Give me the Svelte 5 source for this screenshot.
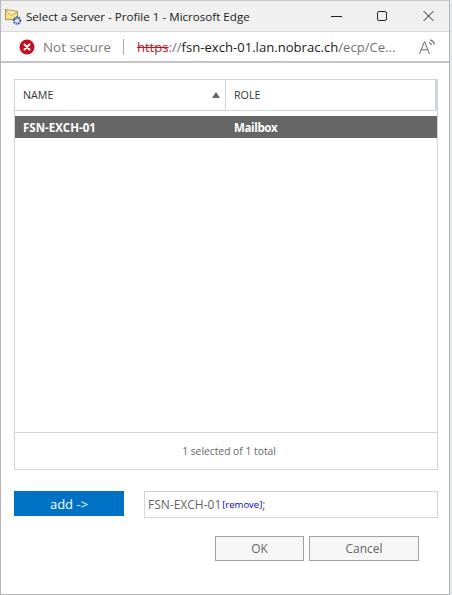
<script>
  let rows = [{ name: 'FSN-EXCH-01', role: 'Mailbox' }];
</script>

<div class="window">
  <div class="titlebar">
    <svg class="appicon" width="17" height="17" viewBox="0 0 17 17">
      <path d="M0.500 1.500L12.500 3.500V11.500H0.500Z" fill="#f6df8e" stroke="#a98f45" />
      <path d="M1 2l5 5.500L12 4" fill="#fbeeb8" stroke="#c4aa60" />
      <circle cx="12" cy="12.500" r="3.200" fill="none" stroke="#3c63b5" stroke-width="2.200" stroke-dasharray="1.600 0.700" />
      <circle cx="12" cy="12.500" r="1.200" fill="#dfe8f7" />
    </svg>
    <span class="title">Select a Server - Profile 1 - Microsoft Edge</span>
    <div class="controls">
      <svg width="12" height="12" viewBox="0 0 12 12"><path d="M0 6.500h11" stroke="#222" fill="none" /></svg>
      <svg width="12" height="12" viewBox="0 0 12 12"><rect x="0.500" y="1.500" width="9" height="9" rx="1.500" stroke="#222" fill="none" /></svg>
      <svg width="12" height="12" viewBox="0 0 12 12"><path d="M0.500 1l10 10M10.500 1l-10 10" stroke="#222" fill="none" /></svg>
    </div>
  </div>

  <div class="addressbar">
    <svg class="erroricon" width="16" height="16" viewBox="0 0 16 16">
      <circle cx="8" cy="8" r="7.500" fill="#c50f1f" />
      <path d="M5.500 5.500l5 5M10.500 5.500l-5 5" stroke="#fff" stroke-width="2" stroke-linecap="round" />
    </svg>
    <span class="secure">Not secure</span>
    <span class="sep"></span>
    <span class="url"><span class="https">https</span><span class="dim">://</span>fsn-exch-01.lan.nobrac.ch<span class="dim">/ecp/Ce...</span></span>
    <svg class="readaloud" width="20" height="18" viewBox="0 0 20 18">
      <path d="M1.500 16L6.500 3.500L11.500 16M3.200 11.800h6.600" stroke="#6a6a6a" fill="none" />
      <path d="M11 4.500a3 3 0 0 1 2.500 2.500M12 1.800a6 6 0 0 1 4.500 4.700" stroke="#6a6a6a" stroke-width="1.200" fill="none" />
    </svg>
  </div>

  <div class="content">
    <div class="grid">
      <div class="head">
        <div class="col name">NAME<span class="sort"></span></div>
        <div class="col role">ROLE</div>
      </div>
      <div class="rows">
        {#each rows as row}
          <div class="row">
            <div class="cell name">{row.name}</div>
            <div class="cell role">{row.role}</div>
          </div>
        {/each}
      </div>
      <div class="foot">1 selected of 1 total</div>
    </div>

    <div class="picker">
      <button class="add">add -&gt;</button>
      <div class="picked">FSN-EXCH-01<span class="remove">[remove]</span>;</div>
    </div>

    <div class="actions">
      <button class="btn ok">OK</button>
      <button class="btn cancel">Cancel</button>
    </div>
  </div>
</div>

<style>
  :global(body) {
    margin: 0;
    background: #e6e8ea;
  }
  .window {
    box-sizing: border-box;
    width: 450px;
    height: 595px;
    background: #fff;
    border: 1px solid #b4b4b4;
    border-top-color: #c8c8c8;
    font-family: "Open Sans", "Noto Sans", sans-serif;
  }
  .titlebar {
    display: flex;
    align-items: center;
    box-sizing: border-box;
    height: 31px;
    background: #f0f0f0;
    border-bottom: 1px solid #d8d8d8;
    color: #1a1a1a;
    font-size: 11.600px;
  }
  .appicon {
    margin-left: 4px;
    margin-right: 4px;
  }
  .title {
    flex: 1;
    white-space: nowrap;
  }
  .controls {
    display: flex;
    gap: 34px;
    margin-right: 14px;
    align-items: center;
  }
  .addressbar {
    display: flex;
    align-items: center;
    box-sizing: border-box;
    height: 31px;
    border-bottom: 2px solid #c4c4c4;
    font-size: 13.400px;
  }
  .erroricon {
    margin-left: 18px;
    margin-right: 8px;
  }
  .secure {
    color: #7a7a7a;
    white-space: nowrap;
  }
  .sep {
    width: 1px;
    height: 16px;
    background: #b0b0b0;
    margin: 0 13px 0 12px;
  }
  .url {
    flex: 1;
    color: #1a1a1a;
    white-space: nowrap;
    font-size: 13.100px;
  }
  .https {
    color: #c50f1f;
    text-decoration: line-through;
  }
  .dim {
    color: #6f6f6f;
  }
  .readaloud {
    margin-right: 11px;
  }
  .content {
    padding: 16px 11px 0 13px;
  }
  .grid {
    display: flex;
    flex-direction: column;
    height: 391px;
    box-sizing: border-box;
    border: 1px solid #cfd6d9;
  }
  .head {
    display: flex;
    height: 30px;
    border-bottom: 1px solid #cfd6d9;
    font-size: 10.700px;
    color: #333;
  }
  .col {
    display: flex;
    align-items: center;
    box-sizing: border-box;
    padding-left: 8px;
  }
  .col.name {
    width: 211px;
    border-right: 1px solid #cfd6d9;
    justify-content: space-between;
    padding-right: 5px;
  }
  .col.role {
    flex: 1;
    border-right: 2px solid #cfd6d9;
  }
  .sort {
    width: 0;
    height: 0;
    border-left: 4px solid transparent;
    border-right: 4px solid transparent;
    border-bottom: 6px solid #666;
  }
  .rows {
    flex: 1;
    padding-top: 5px;
  }
  .row {
    display: flex;
    align-items: center;
    height: 22px;
    background: #666;
    color: #fff;
    font-size: 11.500px;
    font-weight: 700;
  }
  .cell {
    box-sizing: border-box;
    padding-left: 8px;
  }
  .cell.name {
    width: 211px;
  }
  .cell.role {
    letter-spacing: -0.350px;
  }
  .foot {
    height: 36px;
    box-sizing: content-box;
    padding-left: 6px;
    border-top: 1px solid #cfd6d9;
    display: flex;
    align-items: center;
    justify-content: center;
    font-size: 10.300px;
    color: #666;
  }
  .picker {
    display: flex;
    gap: 20px;
    margin-top: 21px;
  }
  .add {
    width: 110px;
    height: 25px;
    padding: 0;
    border: 0;
    background: #0072c6;
    color: #fff;
    font: 13px "Open Sans", "Noto Sans", sans-serif;
  }
  .picked {
    flex: 1;
    box-sizing: border-box;
    height: 27px;
    padding-left: 3px;
    display: flex;
    align-items: center;
    border: 1px solid #cfd6d9;
    font-size: 12px;
    color: #666;
  }
  .remove {
    color: #0000cc;
    font-size: 9.500px;
    padding-left: 1px;
  }
  .actions {
    display: flex;
    justify-content: flex-end;
    gap: 5px;
    margin-top: 18px;
    margin-right: 19px;
  }
  .btn {
    height: 25px;
    padding: 0;
    background: #f6f6f6;
    border: 1px solid #9aa5a8;
    color: #666;
    font: 12px "Open Sans", "Noto Sans", sans-serif;
  }
  .ok {
    width: 89px;
  }
  .cancel {
    width: 110px;
  }
</style>
